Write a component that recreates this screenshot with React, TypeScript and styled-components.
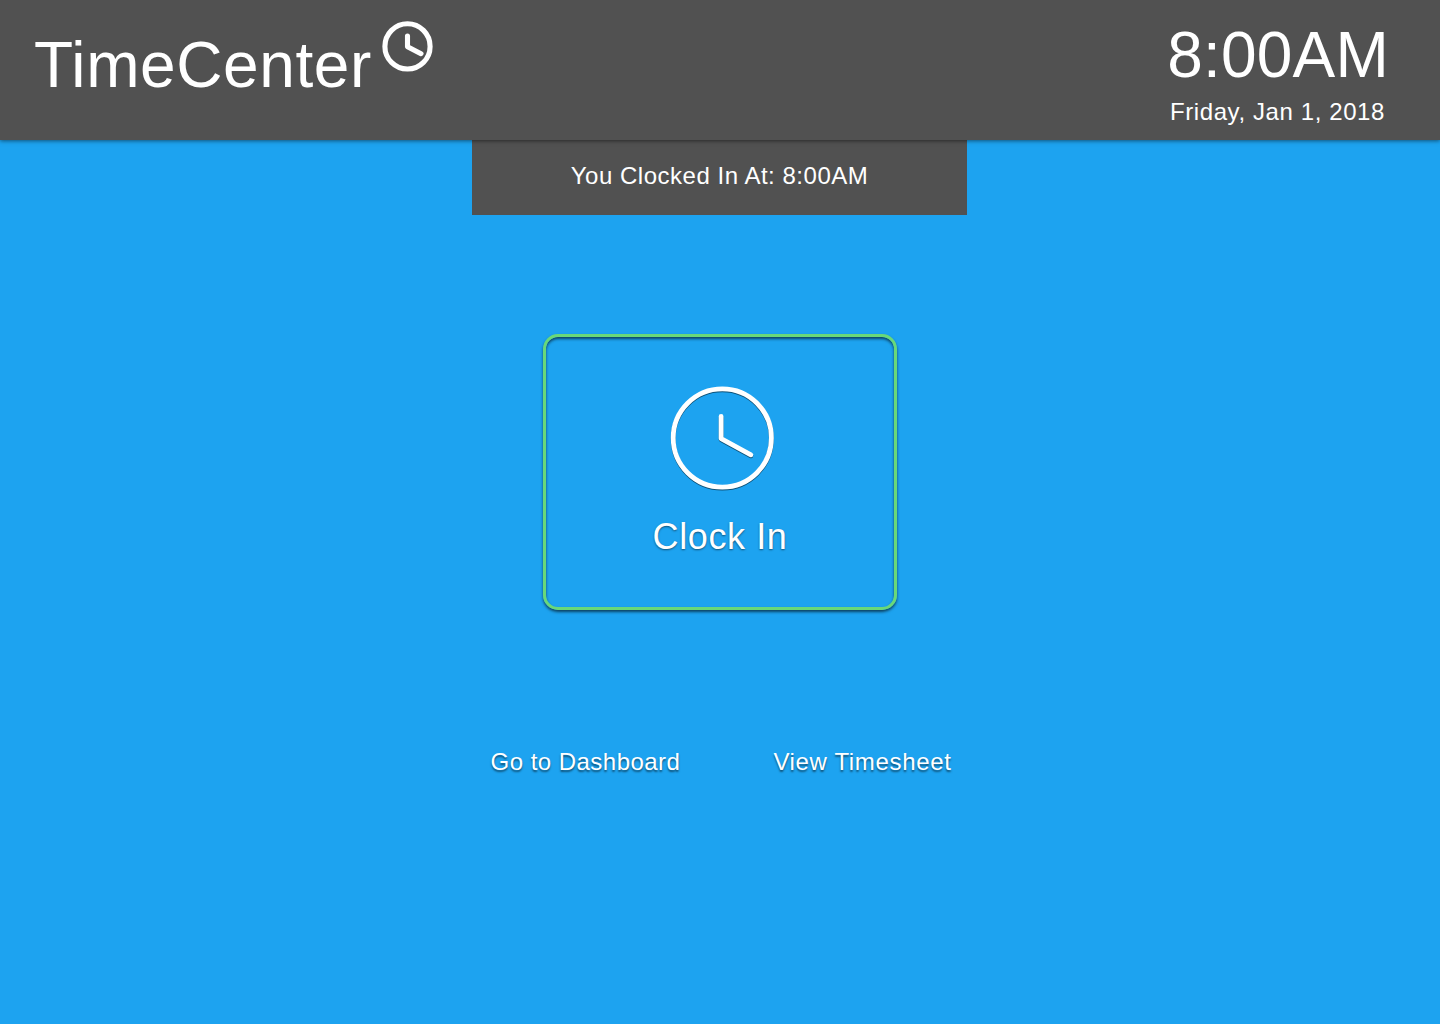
import React from "react";
import styled, { createGlobalStyle } from "styled-components";

const Global = createGlobalStyle`
  * { box-sizing: border-box; }
  body { margin: 0; background: #1da3f0; font-family: "Liberation Sans", Arial, sans-serif; color: #fff; }
`;

const Page = styled.div`
  min-height: 1024px;
  display: flex;
  flex-direction: column;
  align-items: center;
`;

const Header = styled.header`
  width: 100%;
  height: 140px;
  display: flex;
  justify-content: space-between;
  background: #515151;
  box-shadow: 0 1px 4px rgba(0, 0, 0, 0.5);
  position: relative;
`;

const Brand = styled.div`
  display: flex;
  align-items: flex-start;
  padding: 20px 0 0 34px;
  gap: 8px;
`;

const Title = styled.h1`
  margin: 8px 0 0;
  font-size: 64px;
  font-weight: 400;
  line-height: 74px;
  letter-spacing: 0.6px;
`;

const Now = styled.div`
  display: flex;
  flex-direction: column;
  align-items: flex-end;
  padding: 18px 51px 0 0;
`;

const Time = styled.div`
  font-size: 64px;
  line-height: 74px;
  letter-spacing: 0.2px;
  white-space: nowrap;
`;

const Caption = styled.div<{ $tracking: number }>`
  font-size: 24px;
  line-height: 28px;
  letter-spacing: ${(p) => p.$tracking}px;
  white-space: nowrap;
`;

const DateLine = styled(Caption)`
  margin: 6px 4px 0 0;
`;

const Notice = styled.div`
  width: 495px;
  height: 75px;
  margin-right: 1px;
  padding-top: 22px;
  background: #515151;
  text-align: center;
`;

const ClockButton = styled.button`
  width: 354px;
  height: 276px;
  margin-top: 119px;
  padding: 49px 0 0;
  display: flex;
  flex-direction: column;
  align-items: center;
  border: 3px solid #69d879;
  border-radius: 15px;
  background: transparent;
  color: inherit;
  font: inherit;
  box-shadow: 0 2px 3px rgba(0, 0, 0, 0.6), inset 0 2px 3px rgba(0, 0, 0, 0.6);
`;

const ClockLabel = styled.span`
  margin-top: 26px;
  font-size: 36px;
  line-height: 42px;
  letter-spacing: 0.6px;
  text-shadow: 0 1px 2px rgba(0, 0, 0, 0.5);
`;

const Links = styled.nav`
  display: flex;
  gap: 93px;
  margin: 138px 0 0 2px;
`;

const Link = styled.a<{ $tracking: number }>`
  font-size: 24px;
  line-height: 28px;
  letter-spacing: ${(p) => p.$tracking}px;
  text-shadow: 0 2px 2px rgba(0, 0, 0, 0.5);
`;

const SmallClock = styled.svg`
  display: block;
`;

const LargeClock = styled.svg`
  display: block;
  margin-left: 4px;
  overflow: visible;
  filter: drop-shadow(0 1px 0.7px rgba(0, 0, 0, 0.5));
`;

export default function App() {
  return (
    <Page>
      <Global />
      <Header>
        <Brand>
          <Title>TimeCenter</Title>
          <SmallClock width="54" height="54" viewBox="0 0 54 54" fill="none" stroke="#fff" strokeWidth="5.1" strokeLinecap="round" strokeLinejoin="round">
            <circle cx="27.5" cy="26.4" r="22.6" />
            <path d="M27.5 16.1v10.6l13.5 7" />
          </SmallClock>
        </Brand>
        <Now>
          <Time>8:00AM</Time>
          <DateLine $tracking={0.6}>Friday, Jan 1, 2018</DateLine>
        </Now>
      </Header>
      <Notice><Caption $tracking={0.52}>You Clocked In At: 8:00AM</Caption></Notice>
      <ClockButton>
        <LargeClock width="104" height="104" viewBox="0 0 104 104" fill="none" stroke="#fff" strokeWidth="4.8" strokeLinecap="round" strokeLinejoin="round">
          <circle cx="52.3" cy="52" r="49.1" />
          <path d="M51.1 30.5v22.1l29.8 16.2" />
        </LargeClock>
        <ClockLabel>Clock In</ClockLabel>
      </ClockButton>
      <Links>
        <Link $tracking={0.47}>Go to Dashboard</Link>
        <Link $tracking={0.65}>View Timesheet</Link>
      </Links>
    </Page>
  );
}
